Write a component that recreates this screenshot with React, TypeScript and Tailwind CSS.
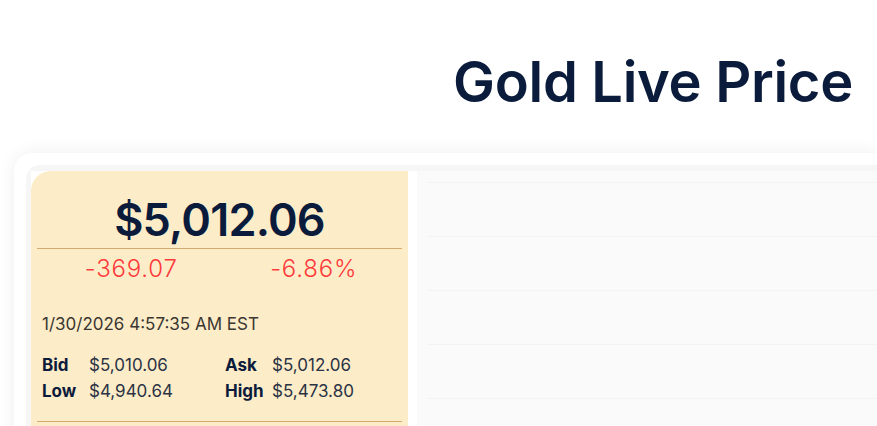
import React from "react";

const stats = [
  { label: "Bid", value: "$5,010.06" },
  { label: "Ask", value: "$5,012.06" },
  { label: "Low", value: "$4,940.64" },
  { label: "High", value: "$5,473.80" },
];

const gridLines = [0, 1, 2, 3, 4];

export default function App() {
  return (
    <div className="h-[426px] overflow-hidden bg-white font-['Inter',sans-serif] text-[#0b1b3b]">
      <div className="flex h-[153px] justify-end pr-[24px] pt-[54px]">
        <h1 className="text-[56px] font-semibold leading-none tracking-[-0.3px]">
          Gold Live Price
        </h1>
      </div>

      <div className="ml-[14px] rounded-tl-[18px] bg-white pl-[12px] pt-[12px] shadow-[0_0_18px_rgba(0,0,0,0.07)]">
        <div className="flex rounded-tl-[14px] bg-[#f6f6f6] pl-[5px] pt-[6px]">
          <div className="bg-white pr-[9px]">
            <div className="h-[300px] w-[377px] rounded-tl-[20px] bg-[#fdecc8] px-[6px] pt-[26px]">
              <div className="text-center text-[45px] font-semibold leading-none tracking-[-0.8px]">
                $5,012.06
              </div>
              <div className="mt-[6px] border-t border-[#d6aa6c]" />
              <div className="mt-[5px] grid grid-cols-2 text-[24px] font-light leading-[30px] tracking-[0.8px] text-[#ff3a3a]">
                <div className="pl-[6px] text-center">-369.07</div>
                <div className="pl-[6px] text-center">-6.86%</div>
              </div>

              <div className="mt-[28px] pl-[5px] text-[17px] leading-[24px] text-[#3a3631]">
                1/30/2026 4:57:35 AM EST
              </div>

              <div className="mt-[16px] grid grid-cols-[47px_136px_47px_auto] pl-[5px] text-[17px] leading-[26px]">
                {stats.map((s) => (
                  <React.Fragment key={s.label}>
                    <span className="font-bold">{s.label}</span>
                    <span className="text-[#2a3344]">{s.value}</span>
                  </React.Fragment>
                ))}
              </div>

              <div className="mt-[17px] border-t border-[#d6aa6c]" />
            </div>
          </div>

          <div className="flex-1 bg-[#fafafa] pl-[11px] pt-[11px]">
            {gridLines.map((i) => (
              <div key={i} className="h-[54px] border-t border-[#f3f3f3]" />
            ))}
          </div>
        </div>
      </div>
    </div>
  );
}
